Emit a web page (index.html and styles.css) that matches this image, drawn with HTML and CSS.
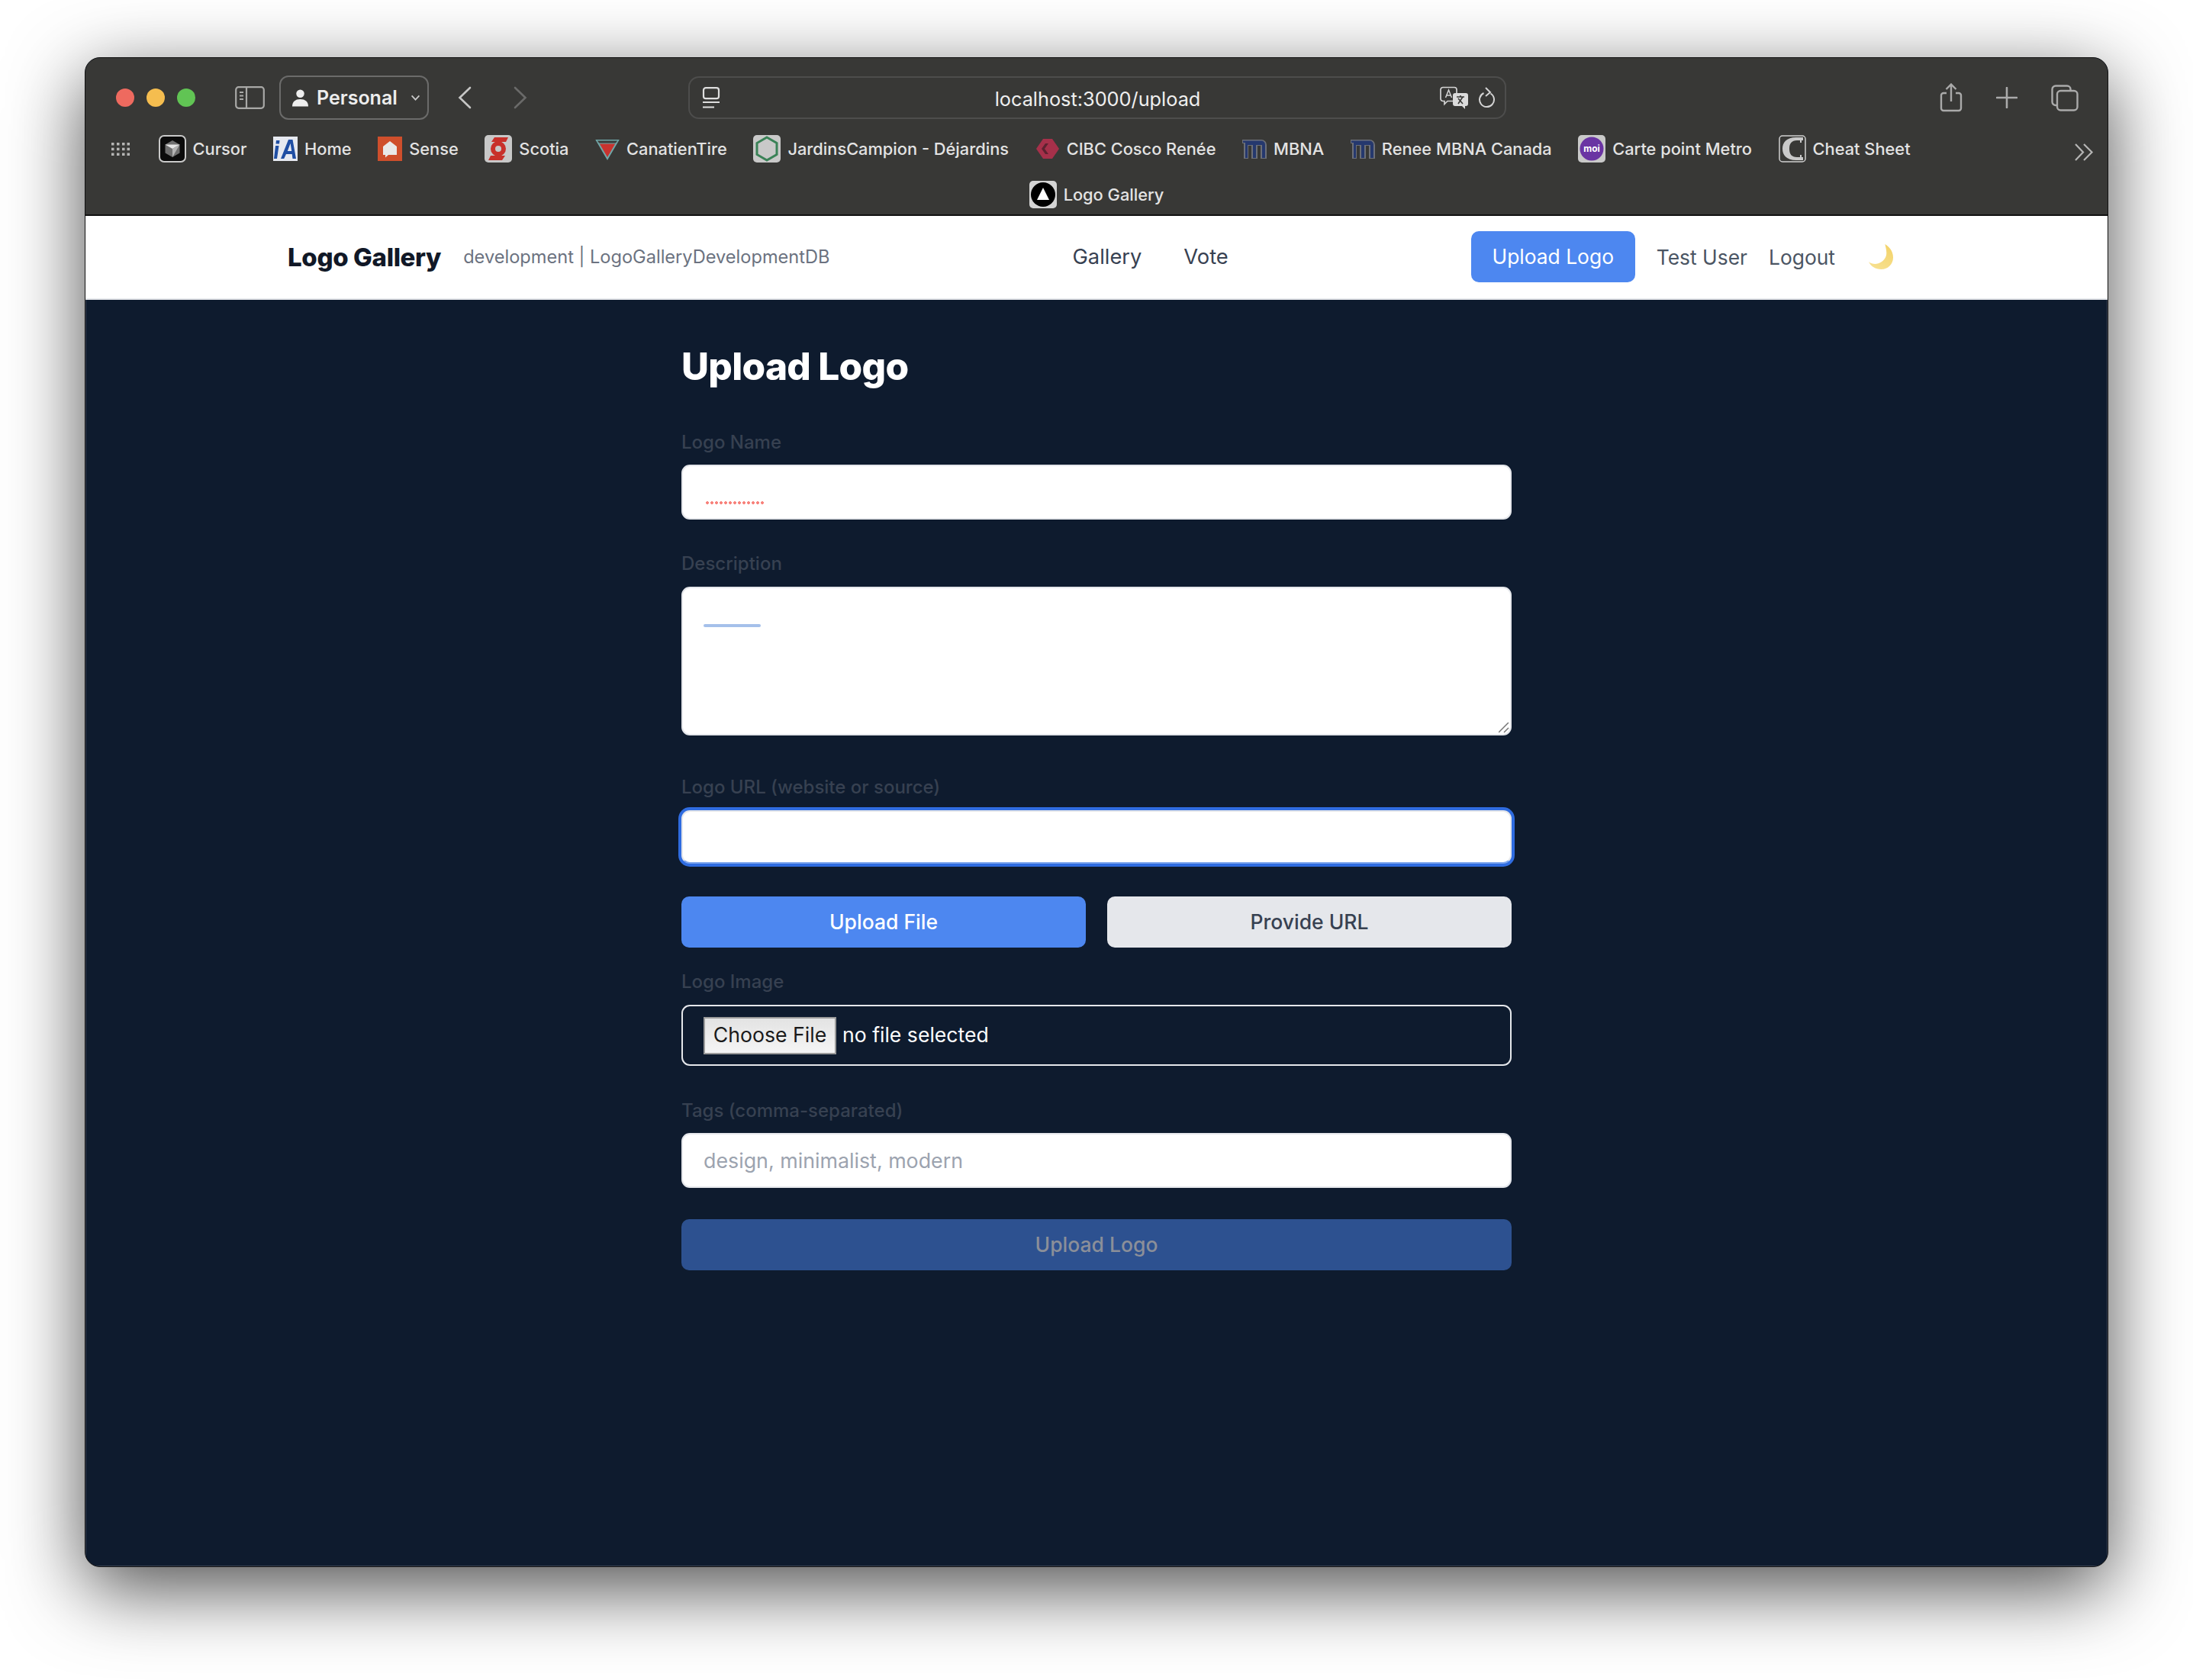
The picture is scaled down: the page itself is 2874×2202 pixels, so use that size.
FILE: index.html
```html
<!DOCTYPE html>
<html lang="en">
<head>
<meta charset="utf-8">
<title>Logo Gallery</title>
<link rel="stylesheet" href="styles.css">
</head>
<body>
<div class="window">
  <header class="chrome">
    <div class="toolbar">
      <div class="lights"><i class="light red"></i><i class="light yellow"></i><i class="light green"></i></div>
      <svg class="ic-sidebar" viewBox="0 0 39 30"><rect x="1.2" y="1.2" width="36.6" height="27.6" rx="3.5" fill="none" stroke="#a9a9a7" stroke-width="2.2"/><path d="M15 1v28" stroke="#a9a9a7" stroke-width="2.2"/><path d="M6 8h5M6 12.5h5M6 17h5" stroke="#a9a9a7" stroke-width="1.8"/></svg>
      <div class="profile">
        <svg class="ic-person" viewBox="0 0 22 24"><circle cx="11" cy="6.5" r="5.5" fill="#eee"/><path d="M0 24c0-6.500 4-10 11-10s11 3.500 11 10z" fill="#eee"/></svg>
        <span class="profile-name">Personal</span>
        <svg class="ic-caret" viewBox="0 0 14 9"><path d="M1.500 1.500 7 7.500l5.500-6" fill="none" stroke="#c8c8c8" stroke-width="2"/></svg>
      </div>
      <svg class="ic-back" viewBox="0 0 18 30"><path d="M16 2 2.500 15 16 28" fill="none" stroke="#c6c6c5" stroke-width="2.600" stroke-linecap="round"/></svg>
      <svg class="ic-fwd" viewBox="0 0 18 30"><path d="M2 2l13.500 13L2 28" fill="none" stroke="#6a6a69" stroke-width="2.600" stroke-linecap="round"/></svg>
      <div class="urlbar">
        <svg class="ic-reader" viewBox="0 0 24 28"><rect x="2" y="1.200" width="20" height="14" rx="3" fill="none" stroke="#dedede" stroke-width="2.200"/><path d="M1 20h22" stroke="#dedede" stroke-width="2.200"/><path d="M1 26.500h15" stroke="#dedede" stroke-width="2.200"/></svg>
        <span class="url">localhost:3000/upload</span>
        <svg class="ic-translate" viewBox="0 0 38 30"><path d="M4 1.500h15a3 3 0 0 1 3 3v12a3 3 0 0 1-3 3H10l-4 4v-4H4a3 3 0 0 1-3-3v-12a3 3 0 0 1 3-3z" fill="#383836" stroke="#d4d4d4" stroke-width="1.700"/><path d="M7.500 15 11.500 5l4 10M9 12h5" fill="none" stroke="#d4d4d4" stroke-width="1.500"/><path d="M20 9h14a3 3 0 0 1 3 3v11a3 3 0 0 1-3 3h-1v4l-4-4h-9a3 3 0 0 1-3-3V12a3 3 0 0 1 3-3z" fill="#dcdcdc"/><path d="M22 14h10M27 12v2M24 23l6-9M30 23l-6-7" fill="none" stroke="#383836" stroke-width="1.600"/></svg>
        <svg class="ic-reload" viewBox="0 0 22 28"><path d="M15.500 8.500A9.500 9.500 0 1 1 6.500 8" fill="none" stroke="#d4d4d4" stroke-width="2"/><path d="M9 1l6 6-6 5" fill="none" stroke="#d4d4d4" stroke-width="2"/></svg>
      </div>
      <div class="actions">
        <svg class="ic-share" viewBox="0 0 30 38"><path d="M9 13H5a3 3 0 0 0-3 3v17a3 3 0 0 0 3 3h20a3 3 0 0 0 3-3V16a3 3 0 0 0-3-3h-4" fill="none" stroke="#aaa" stroke-width="2.400"/><path d="M15 24V2M8.500 8 15 1.500 21.500 8" fill="none" stroke="#aaa" stroke-width="2.400"/></svg>
        <svg class="ic-plus" viewBox="0 0 28 28"><path d="M14 1v26M1 14h26" stroke="#aaa" stroke-width="2.600" stroke-linecap="round"/></svg>
        <svg class="ic-tabs" viewBox="0 0 36 35"><path d="M7 27H6a4.500 4.500 0 0 1-4.500-4.500V6A4.500 4.500 0 0 1 6 1.500h15A4.500 4.500 0 0 1 25.500 6v1" fill="none" stroke="#aaa" stroke-width="2.400"/><rect x="8" y="8" width="26.500" height="25.500" rx="4.500" fill="none" stroke="#aaa" stroke-width="2.400"/></svg>
      </div>
    </div>
    <div class="bookmarks">
      <svg class="ic-grid" viewBox="0 0 24 17"><g fill="#b5b5b4"><rect x="0" y="0" width="3.500" height="3.500"/><rect x="7" y="0" width="3.500" height="3.500"/><rect x="14" y="0" width="3.500" height="3.500"/><rect x="20.500" y="0" width="3.500" height="3.500"/><rect x="0" y="6.700" width="3.500" height="3.500"/><rect x="7" y="6.700" width="3.500" height="3.500"/><rect x="14" y="6.700" width="3.500" height="3.500"/><rect x="20.500" y="6.700" width="3.500" height="3.500"/><rect x="0" y="13.500" width="3.500" height="3.500"/><rect x="7" y="13.500" width="3.500" height="3.500"/><rect x="14" y="13.500" width="3.500" height="3.500"/><rect x="20.500" y="13.500" width="3.500" height="3.500"/></g></svg>
      <a class="bm"><svg class="fav" viewBox="0 0 36 36"><rect x="1" y="1" width="34" height="34" rx="6" fill="#0b0b0b" stroke="#c9c9c9" stroke-width="2"/><path d="M18 7 27.500 12.500V23.500L18 29 8.500 23.500V12.500z" fill="#6f6f6f"/><path d="M8.500 12.500H27.500L18 18z" fill="#e6e6e6"/><path d="M18 18 27.500 12.500 18 29z" fill="#b4b4b4"/></svg><span>Cursor</span></a>
      <a class="bm"><svg class="fav fav-small" viewBox="0 0 32 32"><rect width="32" height="32" fill="#e6e9f0"/><path d="M3 12h4.500L5 29H1zM4 5h4.500L8 9.500H3.500z" fill="#1f4ea3"/><path d="M20 4h5.500L30 29h-4.500l-.8-6H17l-2.800 6H10zM18.800 19h5.400L22.600 9z" fill="#1f4ea3"/></svg><span>Home</span></a>
      <a class="bm"><svg class="fav fav-small" viewBox="0 0 32 32"><rect width="32" height="32" fill="#cf4f2c"/><path d="M16 6 25 13V24H14L10 27.500V24H7V13z" fill="#e9e9e9"/></svg><span>Sense</span></a>
      <a class="bm"><svg class="fav" viewBox="0 0 36 36"><rect width="36" height="36" rx="5" fill="#c8c8c8"/><circle cx="18" cy="18" r="10" fill="#c8302a"/><circle cx="18" cy="18" r="4" fill="#c8c8c8"/><path d="M9 9 13 3h18l-3 6zM27 27l-4 6H5l3-6z" fill="#c8302a"/></svg><span>Scotia</span></a>
      <a class="bm"><svg class="fav fav-small" viewBox="0 0 32 32"><path d="M2 5h28L16 29z" fill="#c8332f" stroke="#6fa7a8" stroke-width="2"/><path d="M2 5h28l-3 4H5z" fill="#3b3b39" stroke="#6fa7a8" stroke-width="1"/></svg><span>CanatienTire</span></a>
      <a class="bm"><svg class="fav" viewBox="0 0 36 36"><rect width="36" height="36" rx="5" fill="#c9c9c9"/><path d="M18 3 31 10.500V25.500L18 33 5 25.500V10.500z" fill="none" stroke="#3a8257" stroke-width="3"/></svg><span>JardinsCampion - Déjardins</span></a>
      <a class="bm"><svg class="fav fav-small" viewBox="0 0 32 32"><path d="M10 3h12l9 13-9 13H10L1 16z" fill="#a6304a"/><path d="M13 9h4l-5 7 5 7h-4l-5-7z" fill="#5d2230"/></svg><span>CIBC Cosco Renée</span></a>
      <a class="bm"><svg class="fav fav-small" viewBox="0 0 32 32"><path d="M0 4h25a7 7 0 0 1 7 7v18h-8V12h-4v17h-8V12H8v17H2V9H0z" fill="#6c6f78"/><path d="M1 5.500h24a5 5 0 0 1 5 5V28h-4V11h-8v17h-4V11H7v17H4V8H1z" fill="#25386e"/></svg><span>MBNA</span></a>
      <a class="bm"><svg class="fav fav-small" viewBox="0 0 32 32"><path d="M0 4h25a7 7 0 0 1 7 7v18h-8V12h-4v17h-8V12H8v17H2V9H0z" fill="#6c6f78"/><path d="M1 5.500h24a5 5 0 0 1 5 5V28h-4V11h-8v17h-4V11H7v17H4V8H1z" fill="#25386e"/></svg><span>Renee MBNA Canada</span></a>
      <a class="bm"><svg class="fav" viewBox="0 0 36 36"><rect width="36" height="36" rx="5" fill="#c9c9c9"/><circle cx="18" cy="18" r="15.500" fill="#6a34a3"/><text x="18" y="22" class="moi">moi</text></svg><span>Carte point Metro</span></a>
      <a class="bm"><svg class="fav" viewBox="0 0 36 36"><rect x="1" y="1" width="34" height="34" rx="4" fill="#383836" stroke="#d0d0d0" stroke-width="1.500"/><path d="M32 3H23C10 3 5 10 5 18s5 15 18 15h9v-4H24C17 29 14 25 14 18S17 7 24 7h8z" fill="#c9c9c9"/><path d="M29 3v7M29 26v7" stroke="#c9c9c9" stroke-width="2"/></svg><span>Cheat Sheet</span></a>
      <svg class="ic-more" viewBox="0 0 26 23"><path d="M2 1l10 10.500L2 22M13 1l10.500 10.500L13 22" fill="none" stroke="#b5b5b4" stroke-width="2.200"/></svg>
    </div>
    <div class="bookmarks-second">
      <a class="bm"><svg class="fav" viewBox="0 0 36 36"><rect width="36" height="36" rx="5" fill="#d4d4d4"/><circle cx="18" cy="18" r="16" fill="#000"/><path d="M18 9 26 25H10z" fill="#fff"/></svg><span>Logo Gallery</span></a>
    </div>
  </header>
  <nav class="site-nav">
    <div class="brand"><strong class="brand-name">Logo Gallery</strong><span class="env">development | LogoGalleryDevelopmentDB</span></div>
    <div class="nav-links"><a>Gallery</a><a>Vote</a></div>
    <div class="nav-right">
      <a class="nav-upload">Upload Logo</a>
      <a class="nav-user">Test User</a>
      <a class="nav-logout">Logout</a>
      <svg class="moon" viewBox="0 0 34 34"><defs><linearGradient id="moonfill" x1="0.700" y1="0" x2="0.300" y2="1"><stop offset="0" stop-color="#f3d36a"/><stop offset="1" stop-color="#f7e08f"/></linearGradient></defs><path d="M22 0C27 3 33 9 33 18c0 9-7 16-16 16C9 34 3 30 0 24c4 3 9 3.500 13 2 7-2.500 11-8 11-14 0-4-1-8-2-12z" fill="url(#moonfill)"/></svg>
    </div>
  </nav>
  <main class="page">
    <form class="upload-form">
      <h1 class="title">Upload Logo</h1>
      <div class="field field-name">
        <label class="label">Logo Name</label>
        <div class="box"><input class="input" type="text"><i class="mark-dots"></i></div>
      </div>
      <div class="field field-desc">
        <label class="label">Description</label>
        <div class="box"><textarea class="input textarea"></textarea><i class="mark-line"></i>
          <svg class="grip" viewBox="0 0 14 14"><path d="M0 13 13 0M7 13l6-6" stroke="#777" stroke-width="1.500" fill="none"/></svg>
        </div>
      </div>
      <div class="field field-url">
        <label class="label">Logo URL (website or source)</label>
        <div class="box"><input class="input input-focus" type="text"></div>
      </div>
      <div class="tabs">
        <button type="button" class="btn btn-blue">Upload File</button>
        <button type="button" class="btn btn-grey">Provide URL</button>
      </div>
      <div class="field field-image">
        <label class="label">Logo Image</label>
        <div class="filebox"><button type="button" class="choose">Choose File</button><span class="nofile">no file selected</span></div>
      </div>
      <div class="field field-tags">
        <label class="label">Tags (comma-separated)</label>
        <div class="box"><input class="input" type="text" placeholder="design, minimalist, modern"></div>
      </div>
      <button type="button" class="btn btn-submit">Upload Logo</button>
    </form>
  </main>
</div>
</body>
</html>
```
FILE: styles.css
```css
* { box-sizing: border-box; }
html, body { margin: 0; height: 100%; }
body { background: #fff; padding: 75px 111px 0; font-family: Inter, "Liberation Sans", sans-serif; overflow: hidden; }
a { display: block; }
.window { width: 2652px; height: 1979px; border-radius: 20px; background: #0e1b2e; overflow: hidden; display: flex; flex-direction: column; box-shadow: 0 28px 100px rgba(0,0,0,.7); border: 1px solid #111; }
.chrome { height: 207px; background: #383836; border-bottom: 2px solid #111; flex: none; }

.toolbar { height: 86px; display: flex; align-items: center; padding: 18px 0 0 40px; position: relative; }
.lights { display: flex; gap: 16px; }
.light { display: block; width: 24px; height: 24px; border-radius: 50%; }
.red { background: #ee6a5f; }
.yellow { background: #f5bd4f; }
.green { background: #61c454; }
.ic-sidebar { width: 39px; height: 30px; margin-left: 52px; flex: none; }
.profile { width: 196px; height: 58px; margin-left: 19px; border: 2px solid #6b6b6a; border-radius: 12px; display: flex; align-items: center; padding-left: 15px; flex: none; }
.ic-person { width: 21px; height: 24px; flex: none; }
.profile-name { margin-left: 11px; width: 123px; font-size: 25px; font-weight: 600; color: #ededed; }
.ic-caret { width: 13px; height: 8px; flex: none; }
.ic-back { width: 18px; height: 30px; margin-left: 38px; flex: none; }
.ic-fwd { width: 18px; height: 30px; margin-left: 55px; flex: none; }
.urlbar { width: 1072px; height: 56px; margin-left: 211px; border: 2px solid #4d4d4c; border-radius: 14px; display: flex; align-items: center; padding: 0 12px 0 16px; flex: none; position: relative; }
.ic-reader { width: 24px; height: 28px; flex: none; }
.url { flex: 1; text-align: center; font-size: 25.300px; color: #efefef; padding: 2px 0 0 46px; }
.ic-translate { width: 38px; height: 30px; flex: none; }
.ic-reload { width: 22px; height: 28px; margin-left: 13px; flex: none; }
.actions { display: flex; align-items: center; margin-left: 568px; }
.ic-share { width: 30px; height: 38px; flex: none; }
.ic-plus { width: 28px; height: 28px; margin-left: 44px; flex: none; }
.ic-tabs { width: 36px; height: 35px; margin-left: 44px; flex: none; }

.bookmarks { height: 50px; margin-top: 8px; display: flex; align-items: center; padding-left: 34px; gap: 34.600px; position: relative; }
.ic-grid { width: 24px; height: 17px; flex: none; margin-right: 3px; }
.bm { display: flex; align-items: center; font-size: 21.800px; color: #e3e3e3; font-weight: 500; white-space: nowrap; gap: 9px; flex: none; }
.fav { width: 36px; height: 36px; flex: none; }
.fav-small { width: 32px; height: 32px; }
.moi { font: 700 12px Inter, sans-serif; fill: #fff; text-anchor: middle; }
.ic-more { width: 26px; height: 23px; position: absolute; right: 18px; top: 18px; }
.bookmarks-second { height: 36px; margin-top: 17px; display: flex; justify-content: center; }

.site-nav { height: 110px; flex: none; background: #fff; border-bottom: 2px solid #e5e7eb; display: flex; align-items: center; justify-content: space-between; padding: 0 266px 1px 265px; }
.brand { display: flex; align-items: center; gap: 29px; }
.brand-name { font-size: 33px; font-weight: 800; color: #111827; letter-spacing: -0.35px; }
.env { font-size: 23.600px; color: #6b7280; }
.nav-links { display: flex; gap: 55px; font-size: 27.300px; color: #374151; }
.nav-right { display: flex; align-items: center; font-size: 26.400px; color: #4b5563; }
.nav-upload { width: 215px; height: 67px; line-height: 67px; text-align: center; background: #4d87f0; color: #fff; border-radius: 10px; }
.nav-user { margin-left: 28px; }
.nav-logout { margin-left: 28px; }
.moon { width: 33px; height: 33px; margin: 0 14px 0 44px; }

.page { flex: 1; box-shadow: inset 1px 0 #3a4353, inset -1px 0 #3a4353, inset 0 -1px #3a4353; }
.upload-form { width: 1088px; margin: 0 auto; padding-top: 53px; display: flex; flex-direction: column; }
.title { margin: 0; font-size: 49.500px; line-height: 68px; font-weight: 800; color: #fff; letter-spacing: -0.7px; }
.label { display: block; height: 44px; line-height: 44px; font-size: 24px; font-weight: 500; color: #374151; margin-bottom: 8px; }
.field-name { margin-top: 44px; }
.field-name .label { margin-bottom: 7px; }
.field-desc { margin-top: 36px; }
.field-url { margin-top: 46px; }
.field-image { margin-top: 23px; }
.field-tags { margin-top: 37px; }
.field-tags .label { margin-bottom: 7px; }
.box { position: relative; display: flex; }
.input { display: block; width: 100%; height: 72px; border: 2px solid #e5e7eb; border-radius: 11px; background: #fff; padding: 0 27px; font: 400 26.800px Inter, sans-serif; color: #111827; outline: none; }
.input::placeholder { color: #9ca3af; opacity: 1; }
.textarea { height: 195px; resize: none; }
.grip { position: absolute; right: 3px; bottom: 3px; width: 14px; height: 14px; }
.input-focus { height: 70px; box-shadow: 0 0 0 4px #2f6ce0; border-bottom-color: #7ea6ec; }
.mark-dots { position: absolute; left: 32px; top: 48px; width: 78px; height: 4px; background: radial-gradient(circle at 2px 2px, #f7827b 1.600px, transparent 2.200px) 0 0 / 6px 4px repeat-x; }
.mark-line { position: absolute; left: 29px; top: 49px; width: 75px; height: 4px; border-radius: 2px; background: #a5c0ea; }
.tabs { display: grid; grid-template-columns: 1fr 1fr; gap: 28px; margin-top: 43px; }
.btn { height: 67px; padding: 0 0 2px; border: 0; border-radius: 10px; font: 500 26.500px Inter, sans-serif; }
.btn-blue { background: #4d87f0; color: #fff; }
.btn-grey { background: #e5e7eb; color: #374151; }
.btn-submit { margin-top: 41px; background: #2d5190; color: #8b8f99; width: 100%; }
.filebox { height: 80px; border: 2px solid #e5e7eb; border-radius: 11px; display: flex; align-items: center; padding-left: 27px; }
.choose { width: 174px; height: 49px; padding: 0 0 2px; border: 2px solid #9b9b9b; background: linear-gradient(#e3e3e3, #f5f5f5); color: #1a1a1a; font: 400 26.700px Inter, sans-serif; }
.nofile { margin-left: 8px; margin-top: -2px; font-size: 26.600px; color: #fff; }
```
